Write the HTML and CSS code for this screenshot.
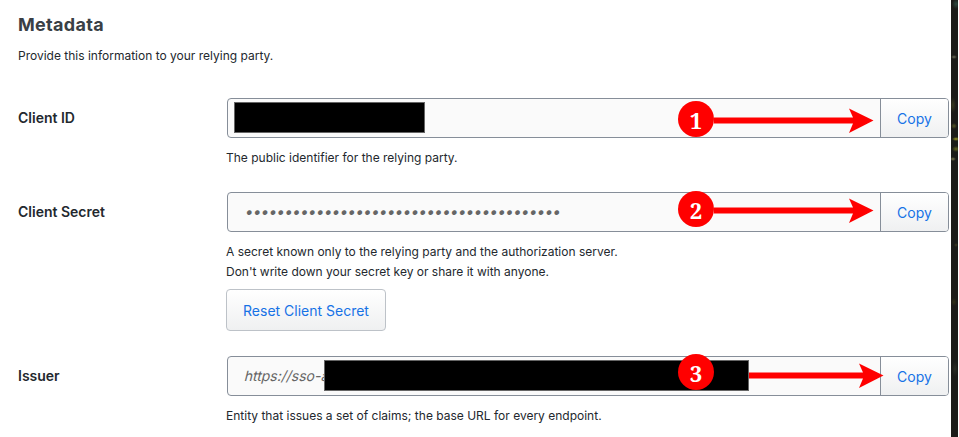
FILE: index.html
```html
<!DOCTYPE html>
<html lang="en">
<head>
<meta charset="utf-8">
<title>Metadata</title>
<link rel="stylesheet" href="styles.css">
</head>
<body>
<div class="page">
<main class="panel">
  <h2>Metadata</h2>
  <p class="intro"><span>Provide this information to your relying party.</span></p>

  <section class="row">
    <label class="label">Client ID</label>
    <div class="field">
      <div class="input-group">
        <div class="input"><span class="redact redact-id"></span></div>
        <button class="copy">Copy</button>
        <svg class="arrow" width="160" height="26" viewBox="0 0 160 26"><path d="M0 9.500h139L135 .5 159.500 12.500 135 25l4-9.500H0z"/></svg>
        <span class="badge">1</span>
      </div>
      <p class="help"><span>The public identifier for the relying party.</span></p>
    </div>
  </section>

  <section class="row row-secret">
    <label class="label">Client Secret</label>
    <div class="field">
      <div class="input-group">
        <div class="input"><span class="dots">••••••••••••••••••••••••••••••••••••••••</span></div>
        <button class="copy">Copy</button>
        <svg class="arrow arrow-2" width="160" height="26" viewBox="0 0 160 26"><path d="M0 9.500h139L135 .5 159.500 12.500 135 25l4-9.500H0z"/></svg>
        <span class="badge badge-2">2</span>
      </div>
      <p class="help"><span>A secret known only to the relying party and the authorization server.</span><br><span>Don't write down your secret key or share it with anyone.</span></p>
      <button class="reset">Reset Client Secret</button>
    </div>
  </section>

  <section class="row">
    <label class="label">Issuer</label>
    <div class="field">
      <div class="input-group">
        <div class="input"><span class="url">https://sso-a</span></div>
        <button class="copy">Copy</button>
        <svg class="arrow arrow-3" width="160" height="26" viewBox="0 0 160 26"><path d="M0 9.500h139L135 .5 159.500 12.500 135 25l4-9.500H0z"/></svg>
        <span class="redact redact-issuer"></span>
        <span class="badge badge-3">3</span>
      </div>
      <p class="help"><span>Entity that issues a set of claims; the base URL for every endpoint.</span></p>
    </div>
  </section>
</main>
<aside class="backdrop"></aside>
</div>
</body>
</html>
```
FILE: styles.css
```css
* { box-sizing: border-box; }
body {
  margin: 0;
  background: #fff;
  color: #23282e;
  font-family: Inter, "Liberation Sans", sans-serif;
  font-size: 12px;
  overflow: hidden;
}
.page { display: flex; width: 958px; height: 437px; }
.panel { width: 951px; padding: 13px 2px 0 18px; flex: none; }
.backdrop {
  flex: 1;
  background:
    radial-gradient(ellipse 4px 2px at 5px 139px, #9b9b22, transparent),
    radial-gradient(ellipse 4px 3px at 5px 149px, #62651f, transparent),
    radial-gradient(ellipse 3px 3px at 3px 126px, #555726, transparent),
    radial-gradient(ellipse 3px 2px at 2px 159px, #7c7a52, transparent),
    radial-gradient(ellipse 3px 2px at 3px 57px, #6a6b58, transparent),
    radial-gradient(ellipse 4px 5px at 5px 4px, #2d4940, transparent),
    radial-gradient(ellipse 3px 8px at 2px 105px, #35381f, transparent),
    radial-gradient(ellipse 2px 2px at 5px 245px, #3c3a20, transparent),
    radial-gradient(ellipse 3px 4px at 3px 302px, #303017, transparent),
    radial-gradient(ellipse 3px 8px at 4px 369px, #2b2d26, transparent),
    #1b1b19;
}
h2 {
  margin: 0;
  font-size: 18px;
  line-height: 24px;
  font-weight: 700;
  letter-spacing: .3px;
  color: #3a3f45;
}
.intro { margin: 9px 0 32px; line-height: 20px; }
.row { display: grid; grid-template-columns: 208px 1fr; min-height: 94px; }
.row-secret { min-height: 164px; }
.label { font-size: 14px; font-weight: 600; line-height: 40px; }
.input-group {
  position: relative;
  display: flex;
  height: 40px;
  margin-left: 1px;
  border: 1px solid #868e99;
  border-radius: 4px;
  background: #fafafa;
}
.input {
  flex: 1;
  display: flex;
  align-items: center;
  padding: 0 0 2px 17px;
  font-size: 14px;
  color: #666;
}
.dots { font-style: italic; font-size: 15px; letter-spacing: -.55px; white-space: nowrap; }
.url { transform: skewX(-14deg); }
.copy, .reset {
  font: 14px Inter, "Liberation Sans", sans-serif;
  color: #1672e6;
  background: linear-gradient(#fff, #eff0f1);
}
.copy {
  width: 68px;
  padding: 0;
  border: 0;
  border-left: 1px solid #868e99;
  border-radius: 0 3px 3px 0;
}
.help { margin: 10px 0 0; line-height: 20px; }
.reset {
  display: block;
  width: 160px;
  height: 42px;
  margin-top: 7px;
  padding: 0;
  border: 1px solid #bdc2c8;
  border-radius: 4px;
}
.redact { position: absolute; height: 31px; top: 3px; background: #000; border: 1px solid #666; }
.redact-id { left: 6px; width: 191px; }
.redact-issuer { left: 96px; width: 425px; }
.arrow { position: absolute; left: 486px; top: 9px; fill: #f00; }
.arrow-2 { top: 5px; }
.arrow-3 { left: 496px; top: 6px; }
.badge {
  position: absolute;
  left: 450px;
  top: 2px;
  width: 36px;
  height: 36px;
  border-radius: 50%;
  background: #f00;
  color: #fff;
  font: bold 22px/38px "Noto Serif", "DejaVu Serif Condensed", "DejaVu Serif", serif;
  text-align: center;
}
.badge-2 { top: -2px; }
.badge-3 { top: -3px; }
```
